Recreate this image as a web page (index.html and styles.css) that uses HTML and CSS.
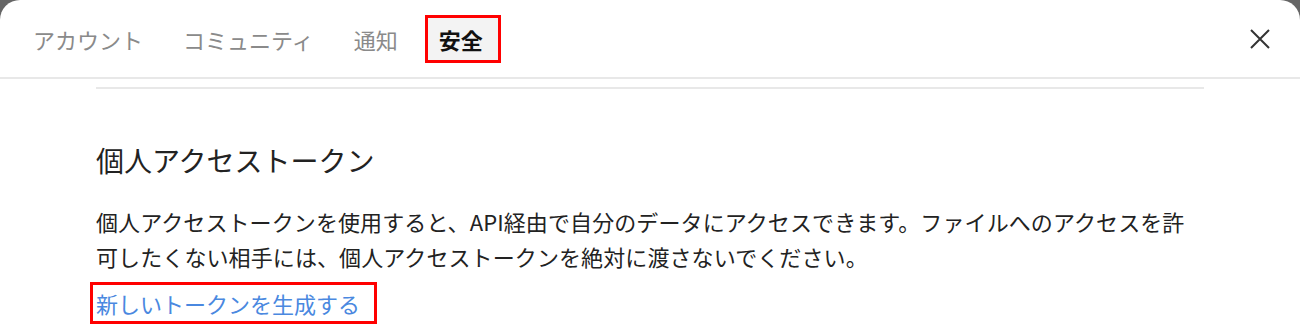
FILE: index.html
```html
<!DOCTYPE html>
<html lang="ja">
<head>
  <meta charset="UTF-8" />
  <title>設定 - 安全</title>
  <link rel="stylesheet" href="styles.css">
</head>
<body>

  <div class="modal">
    <div class="tabs">
      <div class="tab">アカウント</div>
      <div class="tab">コミュニティ</div>
      <div class="tab">通知</div>
      <div class="tab active">安全</div>
      <button class="close-btn" aria-label="閉じる">
        <svg width="20" height="20" viewBox="0 0 20 20">
          <path d="M1 1 L19 19 M19 1 L1 19" stroke="#333" stroke-width="2" fill="none"/>
        </svg>
      </button>
    </div>

    <div class="content">
      <hr class="divider" />
      <h2>個人アクセストークン</h2>
      <p>個人アクセストークンを使用すると、API経由で自分のデータにアクセスできます。ファイルへのアクセスを許可したくない相手には、個人アクセストークンを絶対に渡さないでください。</p>
      <a class="gen-link" href="#">新しいトークンを生成する</a>
    </div>
  </div>

</body>
</html>
```

FILE: styles.css
```css
body {
  margin: 0;
  background: #666;
  font-family: "Noto Sans CJK JP", sans-serif;
}

.modal {
  background: white;
  border-radius: 20px 20px 0 0;
  height: 334px;
  overflow: hidden;
}

.tabs {
  display: flex;
  align-items: center;
  gap: 14px;
  height: 77px;
  padding: 0 30px 0 20px;
  border-bottom: 2px solid #e8e8e8;
}

.tab {
  font-size: 22px;
  line-height: 48px;
  padding: 0 13px;
  color: #8a8a8a;
}

.tab.active {
  color: #111;
  font-weight: bold;
  background: #f3f3f3;
  border: 3px solid #f00;
  line-height: 42px;
  padding: 0 15px 0 11px;
}

.close-btn {
  margin-left: auto;
  background: none;
  border: none;
  padding: 0;
  width: 20px;
  height: 20px;
  cursor: pointer;
}

.content {
  padding: 0 96px;
}

.divider {
  margin: 8px 0 0;
  border: none;
  border-top: 2px solid #e8e8e8;
}

h2 {
  margin: 53px 0 0;
  font-size: 28px;
  font-weight: normal;
  line-height: 36px;
  color: #222;
}

p {
  max-width: 1100px;
  margin: 26px 0 0;
  font-size: 22px;
  line-height: 35px;
  letter-spacing: 0.1px;
  color: #222;
}

.gen-link {
  display: inline-block;
  margin: 8px 0 0 -6px;
  padding: 0 14px 0 3px;
  border: 3px solid #f00;
  font-size: 22px;
  line-height: 36px;
  color: #4a88e0;
  text-decoration: none;
}
```
